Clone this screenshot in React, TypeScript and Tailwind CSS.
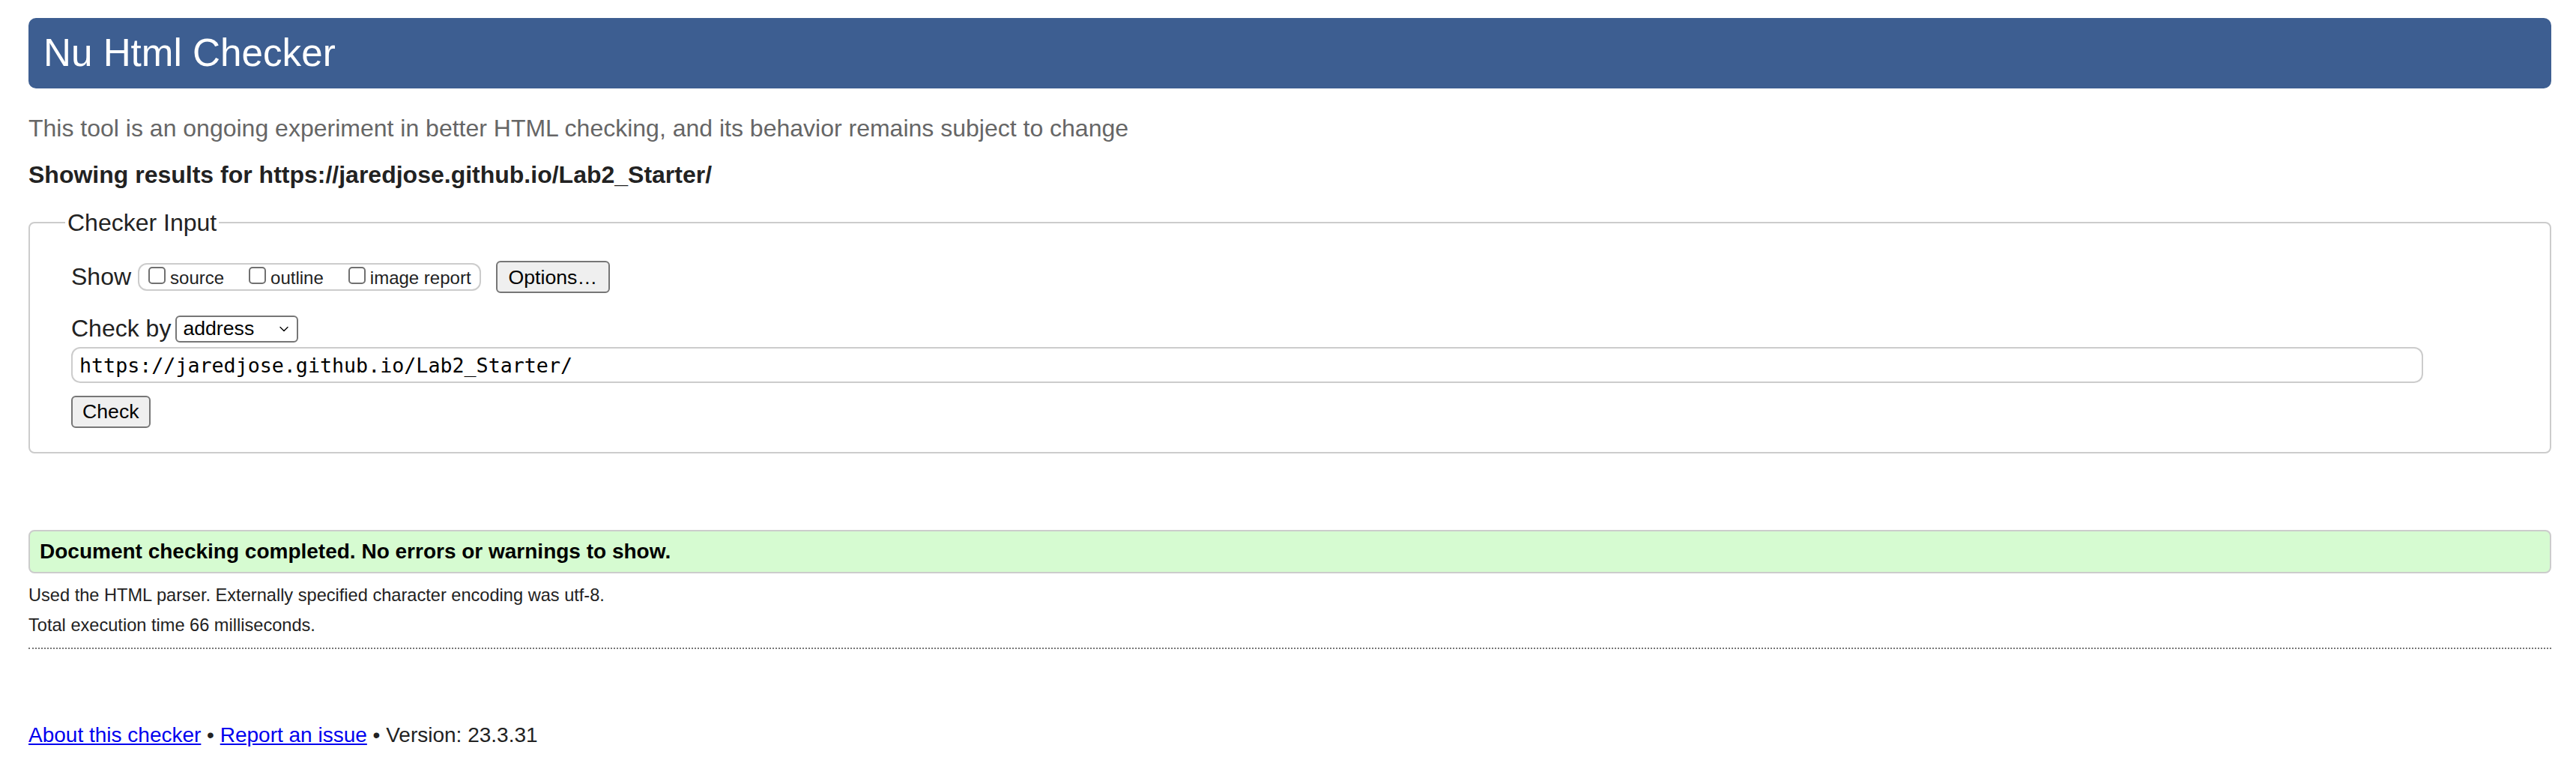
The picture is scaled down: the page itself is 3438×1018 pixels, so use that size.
import { ChevronDown } from 'lucide-react'

const options = ['source', 'outline', 'image report']

export default function App() {
  return (
    <div className="min-h-screen bg-white pl-[38px] pr-[33px] pt-[24px] font-['Liberation_Sans',Arial,sans-serif] text-[#222]">
      {/* Title bar */}
      <h1 className="flex h-[94px] items-center rounded-[10px] bg-[#3d5e91] pl-[20px] text-[51.2px] font-normal leading-[1.15] text-white">
        Nu Html Checker
      </h1>

      <p className="mt-[35px] text-[32px] leading-[1.15] text-[#666]">
        This tool is an ongoing experiment in better HTML checking, and its behavior remains subject to change
      </p>

      <h2 className="mt-[25px] text-[32px] font-bold leading-[1.15] text-[#222]">
        Showing results for https://jaredjose.github.io/Lab2_Starter/
      </h2>

      {/* Checker input */}
      <fieldset className="mt-[27px] rounded-[8px] border-2 border-[#ccc] pb-[32px] pl-[55px] pr-[169px] pt-[33px]">
        <legend className="-ml-[8px] px-[3px] text-[32px] leading-[1.15] text-[#222]">Checker Input</legend>

        <div className="flex h-[43px] items-center">
          <span className="text-[32px] leading-[1.15]">Show</span>
          <div className="ml-[9px] flex h-[37px] items-center gap-[33px] rounded-[12px] border-2 border-[#ccc] pl-[12px] pr-[11px]">
            {options.map(o => (
              <label key={o} className="flex items-baseline gap-[6px] text-[24px] leading-[1.15]">
                <input
                  type="checkbox"
                  className="inline-block h-[23px] w-[23px] shrink-0 appearance-none rounded-[5px] border-2 border-[#707070] bg-white"
                />
                {o}
              </label>
            ))}
          </div>
          <button className="ml-[20px] h-[43px] rounded-[6px] border-2 border-[#767676] bg-[#efefef] px-[15px] text-[26.67px] leading-[1.15] text-black">
            Options…
          </button>
        </div>

        <div className="mt-[29px] flex items-center">
          <span className="text-[32px] leading-[1.15]">Check by</span>
          <span className="relative ml-[6px] inline-block">
            <select
              defaultValue="address"
              className="h-[36px] w-[164px] appearance-none rounded-[6px] border-2 border-[#767676] bg-white pl-[8px] text-[26.67px] leading-[1.15] text-black"
            >
              <option value="address">address</option>
              <option value="file">file upload</option>
              <option value="text">text input</option>
            </select>
            <ChevronDown size={20} strokeWidth={1.6} className="pointer-events-none absolute right-[9px] top-[8px] text-black" />
          </span>
        </div>

        <input
          type="text"
          defaultValue="https://jaredjose.github.io/Lab2_Starter/"
          className="mt-[6px] block h-[48px] w-full rounded-[12px] border-2 border-[#ccc] bg-white pl-[9px] font-['DejaVu_Sans_Mono',monospace] text-[26.67px] text-black outline-none"
        />

        <button className="mt-[17px] block h-[43px] rounded-[6px] border-2 border-[#767676] bg-[#efefef] px-[13px] text-[26.67px] leading-[1.15] text-black">
          Check
        </button>
      </fieldset>

      {/* Result */}
      <div className="mt-[102px] flex h-[58px] items-center rounded-[8px] border-2 border-[#ccc] bg-[#d6fbd1] pl-[13px] text-[28px] font-bold leading-[1.15] text-black">
        Document checking completed. No errors or warnings to show.
      </div>

      <p className="mt-[16px] text-[23.6px] leading-[1.15]">
        Used the HTML parser. Externally specified character encoding was utf-8.
      </p>
      <p className="mt-[13px] text-[23.6px] leading-[1.15]">Total execution time 66 milliseconds.</p>

      <hr className="mt-[16px] border-t-2 border-dotted border-[#777]" />

      <p className="mt-[99px] text-[28px] leading-[1.15]">
        <a href="#" className="text-[#0000ee] underline">About this checker</a>
        {' • '}
        <a href="#" className="text-[#0000ee] underline">Report an issue</a>
        {' • Version: 23.3.31'}
      </p>
    </div>
  )
}
